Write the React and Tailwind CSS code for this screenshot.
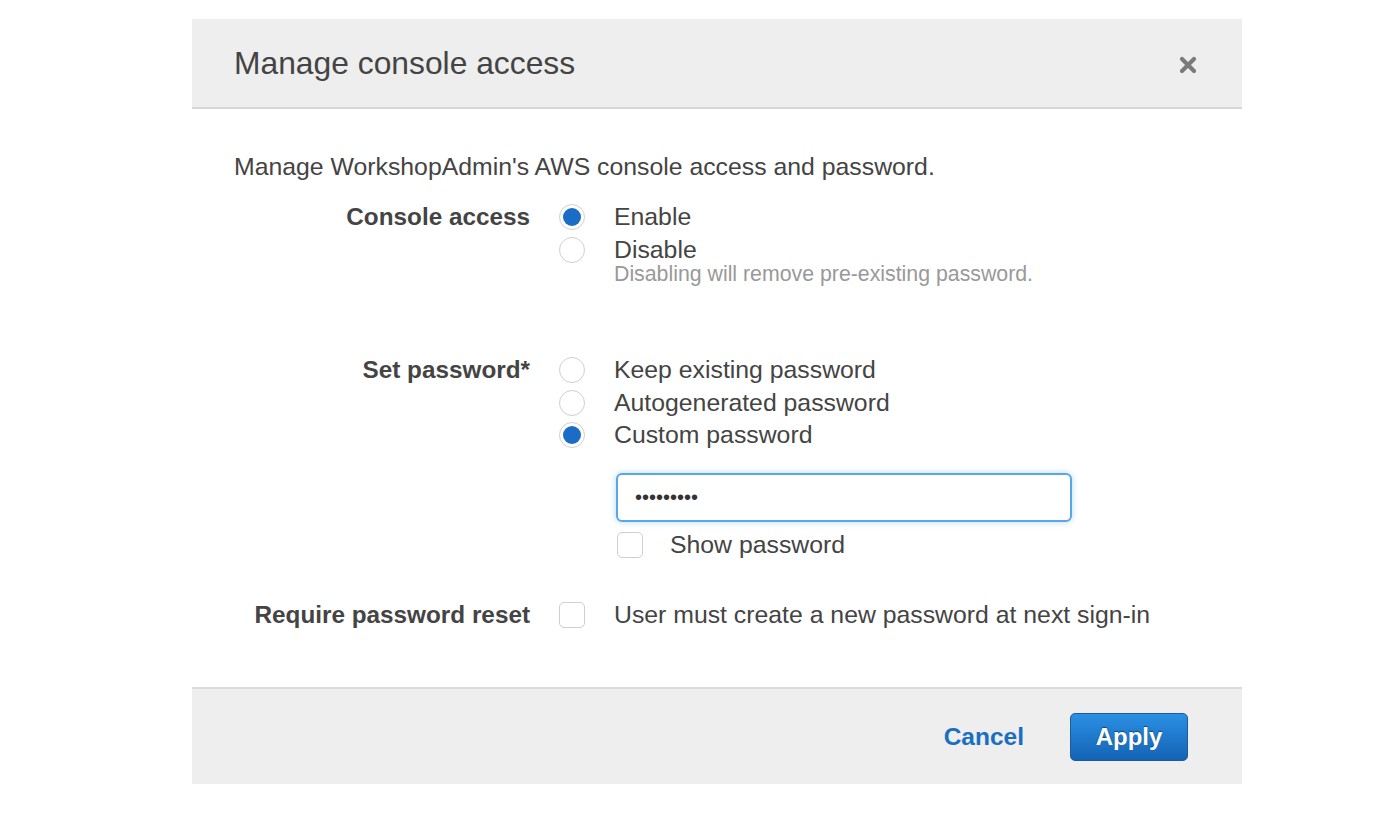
import React from "react";

function Radio({ checked }) {
  return (
    <span className="flex h-[32px] w-[28px] items-center justify-center">
      {checked ? (
        <span className="flex h-[26px] w-[26px] items-center justify-center rounded-full border border-[#d0d0d0] bg-white">
          <span className="h-[18px] w-[18px] rounded-full bg-[#1a6cc4]" />
        </span>
      ) : (
        <span className="h-[26px] w-[26px] rounded-full border border-[#cfcfcf] bg-white" />
      )}
    </span>
  );
}

function Checkbox() {
  return (
    <span className="flex h-[32px] w-[28px] items-center justify-center">
      <span className="h-[26px] w-[26px] rounded-[5px] border border-[#cfcfcf] bg-white" />
    </span>
  );
}

function Option({ checked, children }) {
  return (
    <div className="flex h-[32.5px] items-center">
      <Radio checked={checked} />
      <span className="ml-[28px] leading-[32px]">{children}</span>
    </div>
  );
}

export default function App() {
  return (
    <div
      className="min-h-[822px] w-[1376px] bg-white pt-[19px] text-[#444]"
      style={{ fontFamily: '"Liberation Sans", Arial, sans-serif' }}
    >
      <div className="ml-[192px] w-[1050px] bg-white">
        {/* Header */}
        <div className="flex h-[90px] items-center justify-between border-b-2 border-[#d6d6d6] bg-[#eeeeee] pl-[42px] pr-[44px]">
          <h1 className="mt-[2px] text-[31.8px] leading-none text-[#444]">Manage console access</h1>
          <svg width="20" height="20" viewBox="0 0 20 20" className="mt-[3px]">
            <path d="M4 4 L16 16 M16 4 L4 16" stroke="#7a7a7a" strokeWidth="4.2" strokeLinecap="round" />
          </svg>
        </div>

        {/* Body */}
        <div className="px-[42px] pb-[56px] pt-[42px] text-[24.8px]">
          <p className="leading-[32px]">Manage WorkshopAdmin's AWS console access and password.</p>

          <div className="mt-[18px] grid grid-cols-[296px_1fr] gap-x-[28px]">
            <div className="text-right text-[24.3px] font-bold leading-[32px]">Console access</div>
            <div>
              <Option checked>Enable</Option>
              <Option>Disable</Option>
              <div className="-mt-[4px] pl-[56px] text-[21.3px] leading-[24px] text-[#999]">
                Disabling will remove pre-existing password.
              </div>
            </div>
          </div>

          <div className="mt-[68px] grid grid-cols-[296px_1fr] gap-x-[28px]">
            <div className="text-right text-[24.3px] font-bold leading-[32px]">Set password*</div>
            <div>
              <Option>Keep existing password</Option>
              <Option>Autogenerated password</Option>
              <Option checked>Custom password</Option>
              <div className="ml-[58px] mt-[21px] flex h-[49px] w-[456px] items-center rounded-[6px] border-2 border-[#5ba6e8] bg-white pl-[17px] text-[20px] text-[#333] shadow-[0_0_6px_rgba(91,166,232,0.45)]">
                •••••••••
              </div>
              <div className="ml-[58px] mt-[7px] flex h-[32px] items-center">
                <Checkbox />
                <span className="ml-[26px] leading-[32px]">Show password</span>
              </div>
            </div>
          </div>

          <div className="mt-[38px] grid grid-cols-[296px_1fr] gap-x-[28px]">
            <div className="text-right text-[24.3px] font-bold leading-[32px]">Require password reset</div>
            <div className="flex h-[32px] items-center">
              <Checkbox />
              <span className="ml-[28px] leading-[32px]">User must create a new password at next sign-in</span>
            </div>
          </div>
        </div>

        {/* Footer */}
        <div className="flex h-[97px] items-center justify-end border-t-2 border-[#dcdcdc] bg-[#eeeeee] pr-[54px]">
          <button className="mt-[2px] text-[24.5px] font-bold text-[#1a6fc0]">Cancel</button>
          <button className="ml-[46px] mt-[2px] flex h-[48px] w-[118px] items-center justify-center rounded-[5px] border border-[#1c5b9c] bg-gradient-to-b from-[#2b90e3] to-[#1463b5] text-[24px] font-bold text-white [text-shadow:0_-1px_1px_rgba(0,0,0,0.45)]">
            Apply
          </button>
        </div>
      </div>
    </div>
  );
}
